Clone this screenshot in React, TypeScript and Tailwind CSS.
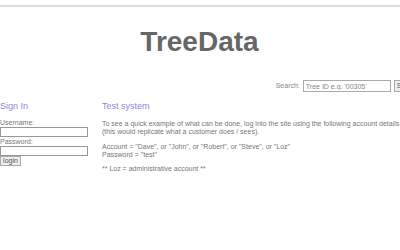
import React from "react";

export default function App() {
  return (
    <div className="w-[400px] h-[250px] overflow-hidden bg-white font-['Liberation_Sans',Arial,sans-serif] text-[#777]">
      <div className="mt-[5px] h-[2px] bg-[#dcdcdc]" />

      <h1 className="mt-[19px] pr-[1px] text-center text-[28px] leading-[32px] font-bold text-[#666]">
        TreeData
      </h1>

      <form
        className="mt-[22px] -mr-[22px] flex items-center justify-end gap-[3px] whitespace-nowrap text-[7px]"
        onSubmit={(e) => e.preventDefault()}
      >
        <label className="text-[#888]">Search:</label>
        <input
          type="text"
          placeholder="Tree ID e.g. '00305'"
          className="w-[88px] h-[12px] px-[2px] border border-[#aaa] text-[7px] placeholder:text-[#888] outline-none"
        />
        <button
          type="submit"
          className="h-[12px] px-[2px] border border-[#aaa] bg-[#eee] text-[7px] text-[#555]"
        >
          Search
        </button>
      </form>

      <div className="mt-[9px] flex">
        <div className="w-[102px] shrink-0">
          <h2 className="text-[9px] leading-[11px] text-[#9a7fe0]">Sign In</h2>
          <div className="mt-[7px] text-[7px] leading-[8px]">Username:</div>
          <input
            type="text"
            className="block w-[88px] h-[10px] border border-[#999]"
          />
          <div className="mt-[1px] text-[7px] leading-[8px]">Password:</div>
          <input
            type="password"
            className="block w-[88px] h-[10px] border border-[#999]"
          />
          <button className="block w-[21px] h-[10px] border border-[#aaa] bg-[#eee] text-[7px] leading-[8px] text-[#555]">
            login
          </button>
        </div>

        <div className="flex-1 whitespace-nowrap">
          <h2 className="text-[9px] leading-[11px] text-[#9a7fe0]">Test system</h2>
          <p className="mt-[8px] text-[7px] leading-[8px]">
            To see a quick example of what can be done, log into the site using the following account details
            <br />
            (this would replicate what a customer does / sees).
          </p>
          <p className="mt-[7px] text-[7px] leading-[8px]">
            Account = "Dave", or "John", or "Robert", or "Steve", or "Loz"
            <br />
            Password = "test"
          </p>
          <p className="mt-[6px] text-[7px] leading-[8px]">** Loz = administrative account **</p>
        </div>
      </div>
    </div>
  );
}
